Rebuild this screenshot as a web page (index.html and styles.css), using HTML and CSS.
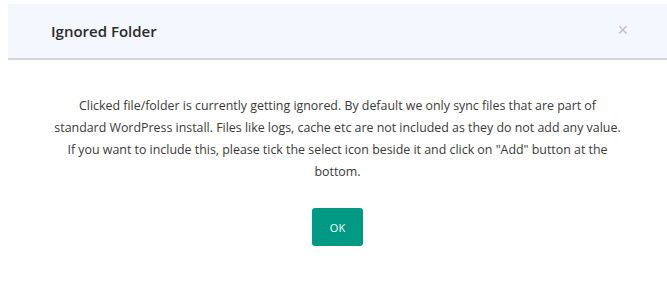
FILE: index.html
```html
<!DOCTYPE html>
<html lang="en">
<head>
    <meta charset="UTF-8">
    <meta name="viewport" content="width=device-width, initial-scale=1.0">
    <title>Ignored Folder</title>
    <link rel="stylesheet" href="styles.css">
</head>
<body>
    <div class="modal">
        <div class="modal-header">
            <h2>Ignored Folder</h2>
            <button class="close" aria-label="Close">&times;</button>
        </div>
        <div class="modal-body">
            <p>Clicked file/folder is currently getting ignored. By default we only sync files that are part of standard WordPress install. Files like logs, cache etc are not included as they do not add any value. If you want to include this, please tick the select icon beside it and click on "Add" button at the bottom.</p>
            <button class="btn-ok">OK</button>
        </div>
    </div>
</body>
</html>
```

FILE: styles.css
```css
* {
    margin: 0;
    padding: 0;
    box-sizing: border-box;
}

body {
    font-family: 'Open Sans', sans-serif;
    background: #ffffff;
    color: #333333;
    padding: 4px 0 0 8px;
}

.modal {
    background: #ffffff;
}

.modal-header {
    height: 56px;
    background: #f4f7fe;
    border-bottom: 2px solid #d2d4da;
    display: flex;
    align-items: center;
    justify-content: space-between;
    padding: 0 39px 0 43px;
}

.modal-header h2 {
    font-size: 15px;
    font-weight: 600;
    color: #2b2b2b;
}

.close {
    background: none;
    border: none;
    color: #c0c0c4;
    font-size: 18px;
    font-weight: 300;
    line-height: 1;
    cursor: pointer;
    margin-top: -2px;
}

.modal-body {
    padding: 35px 44px 0;
    display: flex;
    flex-direction: column;
    align-items: center;
}

.modal-body p {
    font-size: 12.4px;
    line-height: 22px;
    color: #3a3a3a;
    text-align: center;
}

.btn-ok {
    margin-top: 25px;
    width: 51px;
    height: 38px;
    background: #009a84;
    border: none;
    border-radius: 3px;
    color: #ffffff;
    font-family: 'Open Sans', sans-serif;
    font-size: 11px;
    cursor: pointer;
}
```
